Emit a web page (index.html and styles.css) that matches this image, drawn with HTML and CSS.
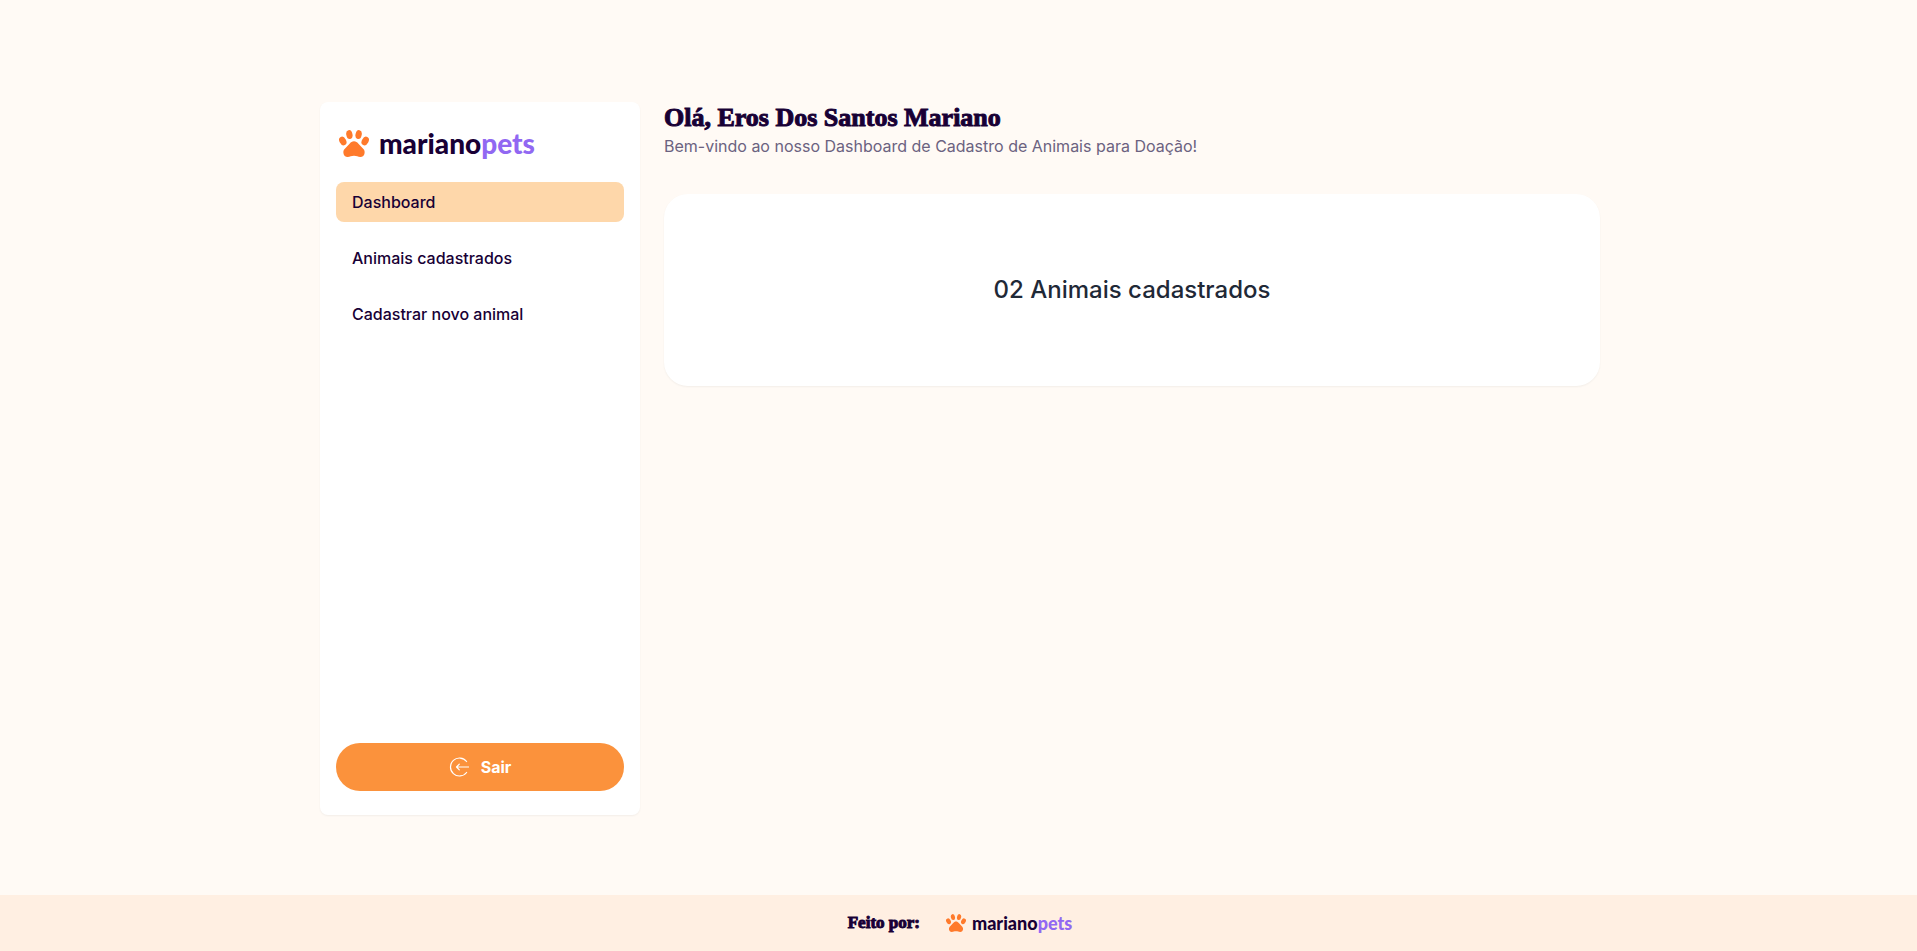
FILE: index.html
```html
<!DOCTYPE html>
<html lang="pt-BR">
<head>
<meta charset="utf-8">
<meta name="viewport" content="width=device-width, initial-scale=1">
<title>Dashboard - marianopets</title>
<link rel="stylesheet" href="styles.css">
</head>
<body>
<svg class="sprite" aria-hidden="true">
  <symbol id="paw" viewBox="0 0 30 27">
    <ellipse cx="10.4" cy="4.6" rx="3.1" ry="4.5" transform="rotate(-12 10.4 4.6)"/>
    <ellipse cx="19.6" cy="4.6" rx="3.1" ry="4.5" transform="rotate(12 19.6 4.6)"/>
    <ellipse cx="3.8" cy="11" rx="3.3" ry="4.6" transform="rotate(-28 3.8 11)"/>
    <ellipse cx="26.2" cy="11" rx="3.3" ry="4.6" transform="rotate(28 26.2 11)"/>
    <path d="M15 11.200c1.900 0 3.100 1 4.200 2.200l5.200 5.600c1 1.100 1.400 2.300 1.200 4-.3 2.500-1.900 3.900-4.300 3.900-2.300 0-3.600-1.100-6.300-1.100s-4 1.100-6.300 1.100c-2.400 0-4-1.400-4.300-3.900-.2-1.700.2-2.900 1.200-4l5.200-5.600c1.100-1.200 2.300-2.200 4.200-2.200z"/>
  </symbol>
</svg>

<main class="container">
  <aside class="sidebar">
    <a class="logo" href="#">
      <svg class="logo-paw" aria-hidden="true"><use href="#paw"/></svg>
      <span class="logo-name">mariano<span class="logo-accent">pets</span></span>
    </a>
    <nav class="nav">
      <a class="nav-link active" href="#" aria-current="page">Dashboard</a>
      <a class="nav-link" href="#">Animais cadastrados</a>
      <a class="nav-link" href="#">Cadastrar novo animal</a>
    </nav>
    <button class="logout" type="button">
      <svg class="logout-icon" viewBox="0 0 20 20" aria-hidden="true">
        <path d="M17.600 4.500A9 9 0 1 0 17.600 15.500M19.500 10H7.500M10.300 7.200L7.500 10l2.800 2.800"/>
      </svg>
      Sair
    </button>
  </aside>

  <section class="content">
    <h1 class="greeting">Olá, Eros Dos Santos Mariano</h1>
    <p class="welcome">Bem-vindo ao nosso Dashboard de Cadastro de Animais para Doação!</p>
    <div class="card">02 Animais cadastrados</div>
  </section>
</main>

<footer class="footer">
  <span class="made-by">Feito por:</span>
  <a class="logo logo-small" href="#">
    <svg class="logo-paw" aria-hidden="true"><use href="#paw"/></svg>
    <span class="logo-name">mariano<span class="logo-accent">pets</span></span>
  </a>
</footer>
</body>
</html>
```
FILE: styles.css
```css
*,
*::before,
*::after {
  box-sizing: border-box;
}

body {
  display: flex;
  flex-direction: column;
  min-height: 100vh;
  margin: 0;
  background: #fffaf5;
  color: #180035;
  font: 16px/24px Inter, sans-serif;
}

a {
  color: inherit;
  text-decoration: none;
}

.sprite {
  position: absolute;
  width: 0;
  height: 0;
}

.container {
  display: flex;
  flex: 1;
  gap: 24px;
  width: 100%;
  max-width: 1283px;
  margin: 0 auto;
  padding: 102px 0 80px 3px;
}

.sidebar {
  display: flex;
  flex: 0 0 320px;
  flex-direction: column;
  padding: 24px 16px;
  border-radius: 8px;
  background: #fff;
  box-shadow: 0 1px 2px rgba(0, 0, 0, 0.05);
}

.logo {
  display: flex;
  align-items: center;
  gap: 10px;
  margin-bottom: 22px;
  padding-left: 3px;
}

.logo-paw {
  width: 30px;
  height: 27px;
  fill: #ff7a2b;
}

.logo-name {
  font: 900 28px/34px Lato, sans-serif;
}

.logo-accent {
  color: #9168f2;
}

.nav {
  display: flex;
  flex-direction: column;
  gap: 16px;
}

.nav-link {
  padding: 8px 16px;
  border-radius: 8px;
  font-weight: 500;
}

.nav-link.active {
  background: #fed7aa;
}

.logout {
  display: flex;
  align-items: center;
  justify-content: center;
  gap: 12px;
  margin-top: auto;
  padding: 12px 24px;
  border: 0;
  border-radius: 24px;
  background: #fb923c;
  color: #fff;
  font: 700 16px/24px Inter, sans-serif;
  cursor: pointer;
}

.logout-icon {
  width: 20px;
  height: 20px;
  fill: none;
  stroke: currentColor;
  stroke-width: 1.2;
  stroke-linecap: round;
  stroke-linejoin: round;
}

.content {
  flex: 1;
  min-width: 0;
}

.greeting,
.made-by {
  font-family: "Liberation Serif", serif;
  font-weight: 700;
  -webkit-text-stroke: 1px currentColor;
}

.greeting {
  margin: 0;
  font-size: 26px;
  line-height: 32px;
}

.made-by {
  font-size: 17px;
}

.welcome {
  margin: 0 0 36px;
  color: #6b6280;
}

.card {
  padding: 80px 24px;
  border-radius: 24px;
  background: #fff;
  box-shadow: 0 1px 2px rgba(0, 0, 0, 0.05);
  color: #1f2937;
  font-size: 24px;
  font-weight: 500;
  line-height: 32px;
  text-align: center;
}

.footer {
  display: flex;
  align-items: center;
  justify-content: center;
  gap: 26px;
  padding: 16px 0 16px 3px;
  background: #ffefe2;
}

.logo-small {
  gap: 6px;
  margin: 0;
  padding: 0;
}

.logo-small .logo-paw {
  width: 20px;
  height: 18px;
}

.logo-small .logo-name {
  font-size: 18px;
  line-height: 24px;
}
```
